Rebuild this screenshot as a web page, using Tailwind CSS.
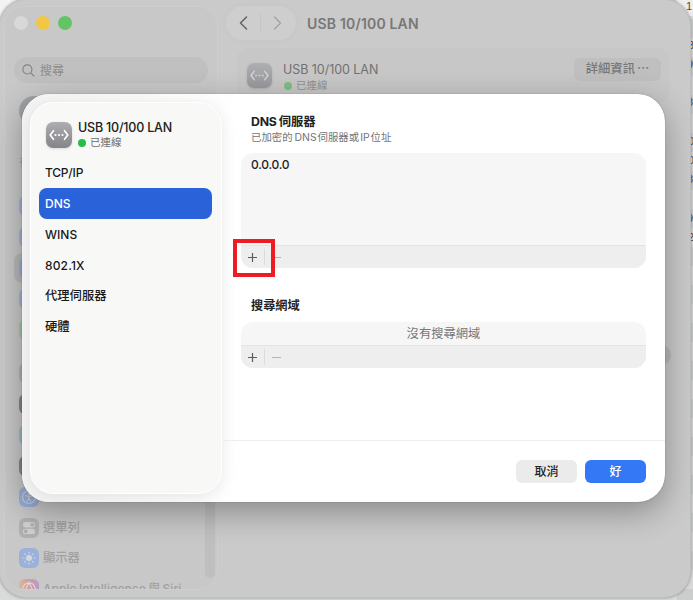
<!DOCTYPE html>
<html lang="zh-Hant">
<head>
<meta charset="utf-8">
<title>USB 10/100 LAN</title>
<script src="https://cdn.jsdelivr.net/npm/@tailwindcss/browser@4"></script>
</head>
<body class="relative h-[600px] w-[693px] overflow-hidden bg-[#d9dada] font-['Inter','Noto_Sans_CJK_TC',sans-serif] text-[12.5px]">

<!-- Spreadsheet behind the window -->
<div class="absolute right-0 top-0 h-[600px] w-[16px] overflow-hidden bg-[repeating-linear-gradient(to_bottom,#d8d8d8_0px,#d8d8d8_19px,#cccece_19px,#cccece_38px)] font-['Liberation_Sans',sans-serif] text-[11px] leading-[12px] text-[#4b4b4b]">
  <div class="h-[16px] bg-[#eeeeee]"></div>
  <span class="absolute right-[1px] top-0">1</span>
  <span class="absolute left-[11px] top-[39px]">3</span>
  <span class="absolute left-[10px] top-[58px]">9</span>
  <span class="absolute left-[10px] top-[96px]">8</span>
  <span class="absolute left-[11px] top-[135px]">0</span>
  <span class="absolute left-[11px] top-[154px]">0</span>
  <span class="absolute left-[10px] top-[173px]">8</span>
  <span class="absolute left-[10px] top-[212px]">9</span>
  <span class="absolute left-[11px] top-[231px]">2</span>
</div>
<div class="absolute left-0 top-0 size-5 bg-[#f3f3f3]"></div>

<!-- Settings window -->
<div class="absolute -left-px -top-px flex h-[599px] w-[692px] overflow-hidden rounded-[27px] border border-[#c0c0c0] bg-[#cacaca] shadow-[0_0_3px_rgba(0,0,0,0.35)]">
  <aside class="ml-1 mt-[6px] flex h-[584px] w-[214px] shrink-0 flex-col overflow-hidden rounded-[20px] border border-[#cecece] bg-[#c8c8c8] px-[9px]">
    <div class="mt-[9px] flex gap-2">
      <span class="size-[14px] rounded-full bg-[#d8d8d8]"></span>
      <span class="size-[14px] rounded-full bg-[#f3c744]"></span>
      <span class="size-[14px] rounded-full bg-[#63c466]"></span>
    </div>
    <div class="mt-[27px] flex h-[26px] shrink-0 items-center gap-[5px] rounded-full bg-[#c0c0c0] pl-2 text-[12px] text-[#8c8c8c]">
      <svg class="size-[13px]" viewBox="0 0 14 14" fill="none" stroke="#818181" stroke-width="1.2" stroke-linecap="round"><circle cx="5.8" cy="5.8" r="4.9"/><path d="M9.5 9.5 13 13"/></svg>
      <span class="mt-[2px]">搜尋</span>
    </div>
    <div class="ml-[5px] mt-[13px] size-[30px] shrink-0 rounded-full bg-[#a0a3a8]"></div>
    <div class="ml-[5px] mt-[29px] h-[14px] shrink-0 text-[10px] leading-[14px] text-[#a5a5a5]">有線</div>
    <div class="mt-[22px] flex flex-col gap-[1px] text-[12.3px] font-medium text-[#a0a0a0]">
      <div class="flex h-[30px] items-center pl-[5px]"><span class="size-5 rounded-md bg-[#a3b4d4]"></span></div>
      <div class="flex h-[30px] items-center pl-[5px]"><span class="size-5 rounded-md bg-[#a3b4d4]"></span></div>
      <div class="flex h-[30px] items-center rounded-lg bg-[#b8b8b8] pl-[5px]"><span class="size-5 rounded-md bg-[#9bb0d6]"></span></div>
      <div class="flex h-[30px] items-center pl-[5px]"><span class="size-5 rounded-md bg-[#a3b4d4]"></span></div>
      <div class="flex h-[30px] items-center pl-[5px]"><span class="size-5 rounded-md bg-[#a3c6a5]"></span></div>
      <div class="mt-3 flex h-[30px] items-center pl-[5px]"><span class="size-5 rounded-md bg-[#b2b2b2]"></span></div>
      <div class="flex h-[30px] items-center pl-[5px]"><span class="size-5 rounded-md bg-[#858585]"></span></div>
      <div class="flex h-[30px] items-center pl-[5px]"><span class="size-5 rounded-md bg-[#9abac6]"></span></div>
      <div class="flex h-[30px] items-center pl-[5px]"><span class="size-5 rounded-md bg-[#858585]"></span></div>
      <div class="flex h-[30px] items-center pl-[5px]">
        <svg class="size-5 rounded-md bg-[#9aafd8]" viewBox="0 0 20 20" fill="none" stroke="#ccd2df" stroke-width="1.1" stroke-linecap="round"><circle cx="10" cy="10" r="6.5"/><circle cx="10" cy="6.8" r=".6" fill="#c4cad6"/><path d="M6.5 8.8 10 9.4 13.5 8.8M10 9.4V11.4L8.2 14.3M10 11.4 11.8 14.3"/></svg>
      </div>
      <div class="flex h-[30px] items-center gap-[4px] pl-[5px]">
        <svg class="size-5 rounded-md bg-[#b0b0b0]" viewBox="0 0 20 20"><rect x="4" y="4" width="12" height="5.4" rx="2.7" fill="#cfcfcf"/><circle cx="13.2" cy="6.7" r="1.8" fill="#acacac"/><rect x="4" y="10.7" width="12" height="5.4" rx="2.7" fill="#cfcfcf"/><circle cx="6.8" cy="13.4" r="1.8" fill="#acacac"/></svg>
        <span>選單列</span>
      </div>
      <div class="-mt-px flex h-[30px] items-center gap-[4px] pl-[5px]">
        <svg class="size-5 rounded-md bg-[#9cb1d9]" viewBox="0 0 20 20" stroke="#d3d8df" stroke-width="1.2" stroke-linecap="round"><circle cx="10" cy="10" r="3" fill="#d3d8df" stroke="none"/><path d="M10 4V5M10 15V16M4 10H5M15 10H16M5.8 5.8 6.4 6.4M13.6 13.6 14.2 14.2M5.8 14.2 6.4 13.6M13.6 6.4 14.2 5.8"/></svg>
        <span>顯示器</span>
      </div>
      <div class="flex h-[30px] items-center gap-[4px] pl-[5px]">
        <svg class="size-5 rounded-md bg-linear-to-r from-[#d9b79a] via-[#d39ba5] to-[#b99bc2]" viewBox="0 0 20 20" fill="none" stroke="#dedada" stroke-width="1.1"><path d="M10 3.5 14.2 5.3 16.5 9.5 15 14 10 16.8 5 14 3.5 9.5 5.8 5.3ZM10 3.5 15 14H5Z"/></svg>
        <span class="whitespace-nowrap text-[12px] tracking-[.06px] [word-spacing:-1px]">Apple Intelligence 與 Siri</span>
      </div>
    </div>
    <div class="absolute left-[205px] top-[300px] h-[278px] w-[10px] rounded-full bg-[#bfbfbf]"></div>
  </aside>

  <main class="flex grow flex-col pr-[19px]">
    <div class="ml-2 mt-[6px] flex h-[34px] items-center">
      <div class="flex h-[34px] w-[70px] items-center rounded-full bg-[#cecece] pl-[12px] shadow-[0_0_8px_rgba(0,0,0,0.025)]">
        <svg class="h-4 w-3" viewBox="0 0 12 16" fill="none" stroke="#656565" stroke-width="1.6" stroke-linecap="round" stroke-linejoin="round"><path d="M8.5 2 2.5 8 8.5 14"/></svg>
        <span class="ml-[10px] h-5 w-px bg-[#c5c5c5]"></span>
        <svg class="ml-[11px] h-4 w-3" viewBox="0 0 12 16" fill="none" stroke="#a5a5a5" stroke-width="1.5" stroke-linecap="round" stroke-linejoin="round"><path d="M2.5 2 8.5 8 2.5 14"/></svg>
      </div>
      <h1 class="ml-[11px] whitespace-nowrap text-[14px] font-semibold tracking-[.18px] text-[#777]">USB 10/100 LAN</h1>
    </div>
    <div class="ml-[19px] mr-[1px] mt-2 flex h-[54px] shrink-0 items-center rounded-xl bg-[#c7c7c7] pl-[10px] pr-[9px]">
      <svg class="mt-px size-[25px] rounded-[7px] bg-linear-to-b from-[#aeafb1] to-[#97989b] shadow-sm" viewBox="0 0 26 26" fill="none" stroke="#d5d5d6" stroke-width="1.5" stroke-linecap="round" stroke-linejoin="round"><path d="M7.5 8.7 4.2 13 7.5 17.3M18.5 8.7 21.8 13 18.5 17.3"/><path stroke-width="2" d="M9.5 13h.01M13 13h.01M16.5 13h.01"/></svg>
      <div class="ml-[11px] mt-[5px] grow">
        <div class="text-[12.5px] leading-[16px] tracking-[-.05px] text-[#717171]">USB 10/100 LAN</div>
        <div class="flex h-[15px] items-center gap-1 text-[10.5px] text-[#929292]"><span class="ml-px size-2 rounded-full bg-[#7fbc83]"></span>已連線</div>
      </div>
      <div class="mb-[12px] flex h-[23px] w-[87px] items-center justify-center rounded-md bg-[#bfbfbf] pt-px text-[12.3px] font-medium text-[#777]">詳細資訊<span class="ml-[2px]">⋯</span></div>
    </div>
    <div class="ml-auto mt-[243px] h-5 w-5 rounded-full bg-[#b8b8b8]"></div>
  </main>
</div>

<!-- Details sheet -->
<div class="absolute left-[22px] top-[94px] flex h-[408px] w-[643px] overflow-hidden rounded-[27px] bg-white shadow-[0_0_1px_rgba(0,0,0,0.55),0_10px_32px_rgba(0,0,0,0.32)]">
  <div class="h-full w-[219px] shrink-0 bg-linear-to-r from-[#f3f3f3] to-white p-2 pr-[18px]">
    <aside class="h-[392px] w-[192px] rounded-[23px] border border-white bg-[#f8f8f7] pl-2 pr-[9px] pt-5 shadow-[0_3px_16px_rgba(0,0,0,0.09)]">
      <div class="flex h-[34px] gap-[6px] pl-[7px]">
        <svg class="mt-[-1px] size-[26px] shrink-0 rounded-[7px] bg-linear-to-b from-[#aeaeb2] to-[#858589] shadow-sm" viewBox="0 0 26 26" fill="none" stroke="white" stroke-width="1.6" stroke-linecap="round" stroke-linejoin="round"><path d="M7.5 8.7 4.2 13 7.5 17.3M18.5 8.7 21.8 13 18.5 17.3"/><path stroke-width="2.2" d="M9.5 13h.01M13 13h.01M16.5 13h.01"/></svg>
        <div class="mt-[-4px]">
          <div class="whitespace-nowrap text-[12.5px] font-medium leading-[17px] tracking-[-.2px] text-[#202020]">USB 10/100 LAN</div>
          <div class="flex h-[14px] items-center gap-1 text-[10.5px] text-[#6d6d6d]"><span class="size-2 rounded-full bg-[#25be47]"></span>已連線</div>
        </div>
      </div>
      <nav class="text-[12px] font-medium text-[#181818]">
        <div class="flex h-[31px] items-center pl-[6px] tracking-[-.2px]">TCP/IP</div>
        <div class="flex h-[31px] items-center rounded-lg bg-[#2962d9] pl-[6px] text-white">DNS</div>
        <div class="flex h-[31px] items-center pl-[6px]">WINS</div>
        <div class="flex h-[31px] items-center pl-[6px] tracking-[.15px]">802.1X</div>
        <div class="flex h-[31px] items-center pl-[6px] text-[12.3px]">代理伺服器</div>
        <div class="flex h-[31px] items-center pl-[6px] text-[12.3px]">硬體</div>
      </nav>
    </aside>
  </div>

  <main class="flex grow flex-col">
    <section class="mr-[19px] pt-[19px]">
      <h2 class="pl-[10px] text-[12.3px] font-bold leading-[17px] text-[#222]"><span class="tracking-[-.2px]">DNS</span><span class="ml-[2px]">伺服器</span></h2>
      <p class="pl-[10px] pt-px text-[10.4px] leading-[14px] text-[#747474]">已加密的<span class="ml-[2px] mr-px">DNS</span>伺服器或<span class="mx-px">IP</span>位址</p>
      <div class="mt-[8px] flex h-[115px] flex-col overflow-hidden rounded-xl bg-[#f6f6f6]">
        <div class="grow pl-[10px] pt-[3px] text-[12px] font-medium leading-[18px] tracking-[-.25px] text-[#222]">0.0.0.0</div>
        <div class="flex h-[23px] items-center border-t border-[#e4e4e4] bg-[#eeeeee] pl-[7px]">
          <svg class="size-[9px]" viewBox="0 0 9 9" stroke="#5c5c5c" stroke-width="1.2"><path d="M0 4.5H9M4.5 0V9"/></svg>
          <span class="ml-[7px] h-4 w-px bg-[#dcdcdc]"></span>
          <span class="ml-[7px] h-px w-[9px] bg-[#b4b4b4]"></span>
        </div>
      </div>
      <h2 class="mt-[28px] pl-[10px] pt-px text-[12.2px] font-bold leading-[18px] text-[#222]">搜尋網域</h2>
      <div class="mt-[7px] flex h-[46px] flex-col overflow-hidden rounded-xl bg-[#f6f6f6]">
        <div class="flex grow items-center justify-center pt-[2px] text-[12.3px] leading-none text-[#777]">沒有搜尋網域</div>
        <div class="flex h-[23px] shrink-0 items-center border-t border-[#e4e4e4] bg-[#eeeeee] pl-[7px]">
          <svg class="size-[9px]" viewBox="0 0 9 9" stroke="#5c5c5c" stroke-width="1.2"><path d="M0 4.5H9M4.5 0V9"/></svg>
          <span class="ml-[7px] h-4 w-px bg-[#dcdcdc]"></span>
          <span class="ml-[7px] h-px w-[9px] bg-[#b4b4b4]"></span>
        </div>
      </div>
    </section>
    <footer class="-ml-[18px] mt-auto flex h-[62px] justify-end gap-2 border-t border-[#eeeeee] pr-[19px] pt-[19px] text-[12px] font-medium">
      <button class="h-[23px] w-[61px] rounded-md bg-[#ebebeb] text-[#222]">取消</button>
      <button class="h-[23px] w-[61px] rounded-md bg-[#3478f6] text-white">好</button>
    </footer>
  </main>
</div>

<!-- Highlight around the add button -->
<div class="absolute left-[233px] top-[239px] h-[38px] w-[42px] border-4 border-[#ed1c24]"></div>
</body>
</html>
